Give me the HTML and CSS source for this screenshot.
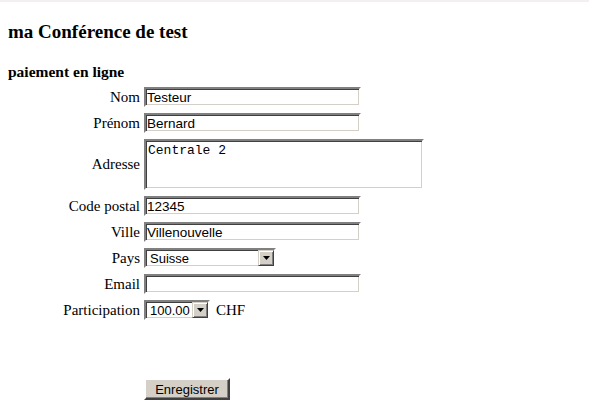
FILE: index.html
```html
<!DOCTYPE html>
<html lang="fr">
<head>
<meta charset="utf-8">
<title>ma Conférence de test</title>
<link rel="stylesheet" href="styles.css">
</head>
<body>
<div class="topbar"></div>
<main class="page">
  <h1 class="title">ma Conférence de test</h1>
  <h2 class="subtitle">paiement en ligne</h2>
  <form class="form">
    <label class="lbl" for="nom">Nom</label>
    <input class="field" id="nom" type="text" value="Testeur">

    <label class="lbl" for="prenom">Prénom</label>
    <input class="field" id="prenom" type="text" value="Bernard">

    <label class="lbl" for="adresse">Adresse</label>
    <textarea class="area" id="adresse">Centrale 2</textarea>

    <label class="lbl" for="cp">Code postal</label>
    <input class="field" id="cp" type="text" value="12345">

    <label class="lbl" for="ville">Ville</label>
    <input class="field" id="ville" type="text" value="Villenouvelle">

    <label class="lbl" for="pays">Pays</label>
    <span class="select select-pays">
      <select id="pays" class="select-input"><option>Suisse</option></select>
      <span class="arrow" aria-hidden="true"><svg width="7" height="4" viewBox="0 0 7 4"><path d="M0 0H7L3.5 4Z" fill="#000"/></svg></span>
    </span>

    <label class="lbl" for="email">Email</label>
    <input class="field" id="email" type="text" value="">

    <label class="lbl" for="part">Participation</label>
    <span class="inline">
      <span class="select select-part">
        <select id="part" class="select-input"><option>100.00</option></select>
        <span class="arrow" aria-hidden="true"><svg width="7" height="4" viewBox="0 0 7 4"><path d="M0 0H7L3.5 4Z" fill="#000"/></svg></span>
      </span>
      <span class="unit">CHF</span>
    </span>

    <span class="spacer"></span>
    <button class="btn" type="button">Enregistrer</button>
  </form>
</main>
</body>
</html>
```
FILE: styles.css
```css
html, body {
  margin: 0;
  padding: 0;
  background: #fff;
  color: #000;
}
.topbar {
  height: 2px;
  background: #f5f0f0;
}
.page {
  padding: 19px 8px 0 8px;
  font-family: "Liberation Serif", serif;
}
.title {
  margin: 0;
  font-size: 19px;
  line-height: 22px;
  font-weight: bold;
}
.subtitle {
  margin: 20px 0 0 0;
  font-size: 15.5px;
  line-height: 18px;
  font-weight: bold;
}
.form {
  margin-top: 6px;
  display: grid;
  grid-template-columns: 132px auto;
  column-gap: 4px;
  row-gap: 6px;
  align-items: center;
  justify-items: start;
}
.lbl {
  justify-self: end;
  font-size: 15px;
  line-height: 17px;
}
.field {
  width: 217px;
  height: 20px;
  box-sizing: border-box;
  margin: 0;
  padding: 0 1px;
  border: 2px solid;
  border-color: #808080 #fff #fff #808080;
  box-shadow: inset 1px 1px 0 #404040, inset -1px -1px 0 #d4d0c8;
  font: 13.5px "Liberation Sans", Arial, sans-serif;
  color: #000;
  background: #fff;
  outline: none;
}
.area {
  width: 280px;
  height: 51px;
  box-sizing: border-box;
  margin: 0;
  padding: 2px 2px;
  border: 2px solid;
  border-color: #808080 #fff #fff #808080;
  box-shadow: inset 1px 1px 0 #404040, inset -1px -1px 0 #d4d0c8;
  font: 13px "Liberation Mono", "Courier New", monospace;
  line-height: 15px;
  color: #000;
  resize: none;
  overflow: hidden;
  outline: none;
}
.select {
  display: inline-flex;
  align-items: stretch;
  height: 20px;
  box-sizing: border-box;
  border: 2px solid;
  border-color: #808080 #fff #fff #808080;
  box-shadow: inset 1px 1px 0 #404040, inset -1px -1px 0 #d4d0c8;
  background: #fff;
  padding: 0;
}
.select-pays { width: 132px; }
.select-part { width: 66px; }
.select-input {
  appearance: none;
  -webkit-appearance: none;
  flex: 1;
  min-width: 0;
  border: 0;
  margin: 0;
  padding: 0 0 0 4px;
  background: transparent;
  font: 13px "Liberation Sans", Arial, sans-serif;
  color: #000;
  outline: none;
}
.arrow {
  width: 16px;
  flex: none;
  box-sizing: border-box;
  display: flex;
  align-items: center;
  justify-content: center;
  background: #d4d0c8;
  border: 1px solid;
  border-color: #d4d0c8 #404040 #404040 #d4d0c8;
  box-shadow: inset 1px 1px 0 #fff, inset -1px -1px 0 #808080;
}
.inline {
  display: inline-flex;
  align-items: center;
  gap: 6px;
}
.unit {
  font-size: 15px;
  line-height: 17px;
}
.spacer { display: block; }
.btn {
  margin-top: 52px;
  width: 86px;
  height: 22px;
  box-sizing: border-box;
  padding: 0;
  border: 2px solid;
  border-color: #fff #404040 #404040 #fff;
  box-shadow: inset -1px -1px 0 #808080, inset 1px 1px 0 #d4d0c8;
  background: #d4d0c8;
  font: 13px "Liberation Sans", Arial, sans-serif;
  color: #000;
}
```
